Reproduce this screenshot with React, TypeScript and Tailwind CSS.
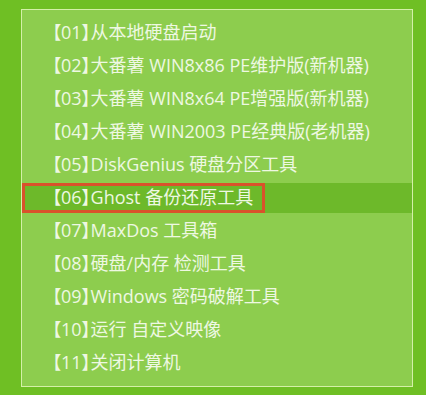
const items = [
  "【01】从本地硬盘启动",
  "【02】大番薯 WIN8x86 PE维护版(新机器)",
  "【03】大番薯 WIN8x64 PE增强版(新机器)",
  "【04】大番薯 WIN2003 PE经典版(老机器)",
  "【05】DiskGenius 硬盘分区工具",
  "【06】Ghost 备份还原工具",
  "【07】MaxDos 工具箱",
  "【08】硬盘/内存 检测工具",
  "【09】Windows 密码破解工具",
  "【10】运行 自定义映像",
  "【11】关闭计算机",
]

export default function App() {
  const selected = 5
  return (
    <div
      className="w-[426px] h-[395px] bg-[#6fbf24] pt-[9px] pl-[21px] [font-feature-settings:'palt']"
      style={{ fontFamily: '"Open Sans", "Noto Sans CJK SC", sans-serif' }}
    >
      <div className="w-[392px] h-[378px] bg-[#8dcd4e] border border-[#d4f0a8] pt-[6px]">
        {items.map((label, i) => (
          <div key={label} className="h-[33px] flex items-center">
            {i === selected ? (
              <div className="w-full h-[30px] bg-[#6db92a] flex items-center">
                <div className="h-[30px] w-[243px] border-[3px] border-[#d9522b] flex items-center pl-[27px] text-[18px] text-[#eef8e2] whitespace-nowrap">
                  {label}
                </div>
              </div>
            ) : (
              <div className="pl-[30px] text-[18px] text-[#eef8e2] whitespace-nowrap">{label}</div>
            )}
          </div>
        ))}
      </div>
    </div>
  )
}
